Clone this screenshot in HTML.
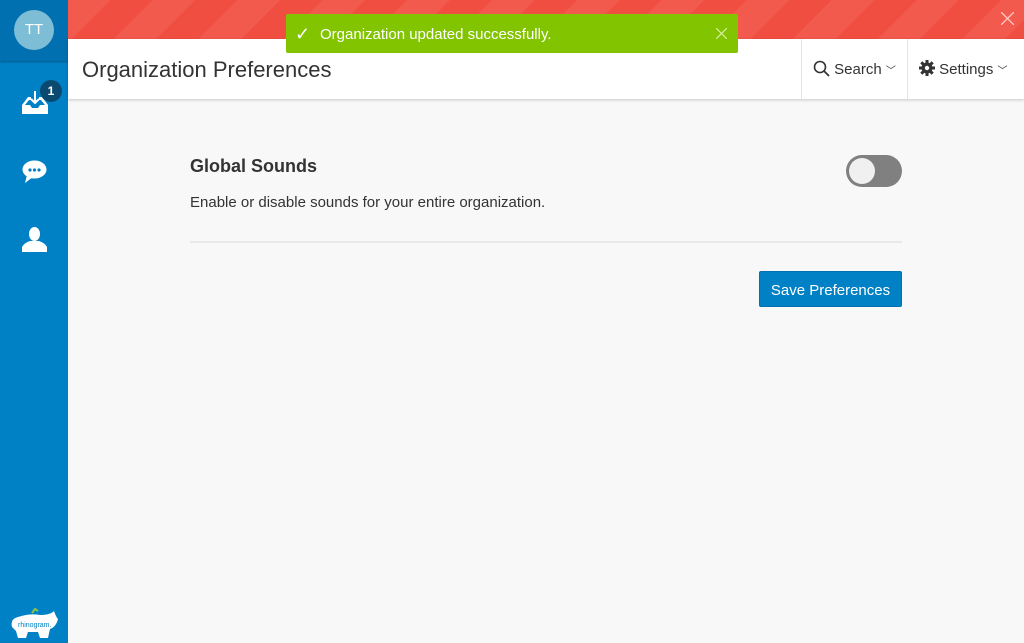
<!DOCTYPE html><html><head><style>
*{margin:0;padding:0;box-sizing:border-box}
body{width:1024px;height:643px;overflow:hidden;background:#f8f8f8;font-family:"Liberation Sans",sans-serif;position:relative}
.side{position:absolute;left:0;top:0;width:68px;height:643px;background:#0081c6}
.top{position:absolute;left:0;top:0;width:68px;height:61px;background:#0070b0;box-shadow:0 1px 2px rgba(0,0,0,.3)}
.av{position:absolute;left:14px;top:10px;width:40px;height:40px;border-radius:50%;background:#7ebdd6;color:#fff;font-size:15px;text-align:center;line-height:40px}
.banner{position:absolute;left:68px;top:0;right:0;height:39px;background:repeating-linear-gradient(135deg,#f35a4e 0 30px,#f14e42 30px 60px)}
.hdr{position:absolute;left:68px;top:39px;right:0;height:60px;background:#fff;box-shadow:0 1px 3px rgba(0,0,0,.2)}
.title{position:absolute;left:14px;top:18px;font-size:22px;color:#333}
.nav{position:absolute;top:0;height:60px;border-left:1px solid #e5e5e5;font-size:15px;color:#333;line-height:62px}
.toast{position:absolute;left:286px;top:14px;width:452px;height:39px;background:#82c400;color:#fff;font-size:15px;line-height:41px;padding-left:34px;border-radius:2px}
.card{position:absolute;left:190px;top:150px;width:712px}
h2{font-size:18px;font-weight:bold;color:#333;position:absolute;top:6px}
p{font-size:15px;color:#333;position:absolute;top:44px}
.sw{position:absolute;left:656px;top:5px;width:56px;height:32px;border-radius:16px;background:#808080}
.knob{position:absolute;left:3px;top:3px;width:26px;height:26px;border-radius:50%;background:#f0f0f0}
.hr{position:absolute;top:91px;left:0;width:712px;height:2px;background:#e8e8e8}
.btn{position:absolute;left:569px;top:121px;width:143px;height:36px;background:#0081c6;border:1px solid #0070b0;border-radius:2px;color:#fff;font-size:15px;text-align:center;line-height:37px}
</style></head><body>
<div class="side"><div class="top"><div class="av">TT</div></div>
<svg style="position:absolute;left:22px;top:91px" width="26" height="24" viewBox="0 0 26 24"><path d="M0 14 L6 6 H9 V9 H7 L3 14 H8 L10 17 H16 L18 14 H23 L19 9 H17 V6 H20 L26 14 V23 H0Z" fill="#fff"/><path d="M13 0V12M9 8l4 4 4-4" stroke="#fff" stroke-width="2" fill="none"/></svg>
<div style="position:absolute;left:40px;top:80px;width:22px;height:22px;border-radius:50%;background:#0b4a70;color:#fff;font-size:12px;font-weight:bold;text-align:center;line-height:22px">1</div>
<svg style="position:absolute;left:22px;top:160px" width="25" height="23" viewBox="0 0 25 23"><ellipse cx="12.5" cy="9.5" rx="12" ry="9" fill="#fff"/><path d="M5 15 L3 23 L11 17Z" fill="#fff"/><circle cx="8" cy="10" r="1.6" fill="#0081c6"/><circle cx="12.5" cy="10" r="1.6" fill="#0081c6"/><circle cx="17" cy="10" r="1.6" fill="#0081c6"/></svg>
<svg style="position:absolute;left:22px;top:227px" width="25" height="25" viewBox="0 0 25 25"><ellipse cx="12.5" cy="7" rx="5.5" ry="7" fill="#fff"/><path d="M0 25 V20 Q2 16 8 14 H17 Q23 16 25 20 V25Z" fill="#fff"/></svg>
<svg style="position:absolute;left:10px;top:605px" width="50" height="34" viewBox="0 0 50 34"><path d="M22 8 l3 -4 3 2" stroke="#8bc34a" stroke-width="2" fill="none"/><path d="M2 22 Q0 14 8 12 Q20 8 30 10 Q40 10 44 6 Q46 12 48 14 Q46 22 40 24 L38 33 H30 L28 27 H18 L16 33 H8 L6 26Z" fill="#fff"/><text x="8" y="22" font-size="7" fill="#0081c6" font-family="Liberation Sans">rhinogram.</text></svg>
</div>
<div class="banner"><svg style="position:absolute;right:10px;top:12px" width="13" height="13"><path d="M0 0L13 13M13 0L0 13" stroke="#fcc" stroke-width="1.3"/></svg></div>
<div class="hdr"><div class="title">Organization Preferences</div>
<div class="nav" style="left:733px;width:106px;padding-left:11px"><svg width="17" height="17" viewBox="0 0 17 17" style="vertical-align:-3px"><circle cx="7" cy="7" r="5.5" stroke="#333" stroke-width="1.6" fill="none"/><path d="M11 11l5 5" stroke="#333" stroke-width="1.8"/></svg> Search <span style="font-size:10px">﹀</span></div>
<div class="nav" style="left:839px;width:117px;padding-left:11px"><svg width="16" height="16" viewBox="0 0 16 16" style="vertical-align:-2px"><circle cx="8" cy="8" r="5.5" fill="#333"/><g stroke="#333" stroke-width="3"><path d="M8 0v16M0 8h16M2.3 2.3l11.4 11.4M13.7 2.3L2.3 13.7"/></g><circle cx="8" cy="8" r="2.2" fill="#fff"/></svg> Settings <span style="font-size:10px">﹀</span></div>
</div>
<div class="toast"><span style="position:absolute;left:9px;font-size:18px">✓</span>Organization updated successfully.<svg style="position:absolute;right:11px;top:14px" width="11" height="11"><path d="M0 0L11 11M11 0L0 11" stroke="#d7f0a0" stroke-width="1.2"/></svg></div>
<div class="card"><h2>Global Sounds</h2><p>Enable or disable sounds for your entire organization.</p>
<div class="sw"><div class="knob"></div></div><div class="hr"></div><div class="btn">Save Preferences</div></div>
</body></html>
